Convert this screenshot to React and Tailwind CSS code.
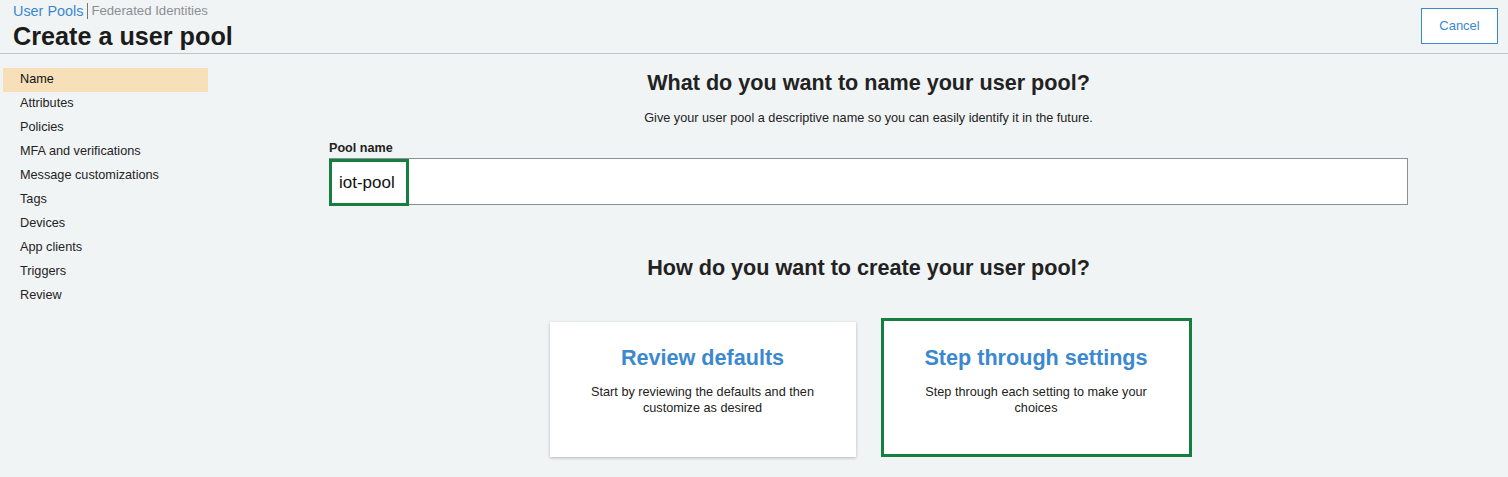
import React from 'react';

const steps = [
    'Name',
    'Attributes',
    'Policies',
    'MFA and verifications',
    'Message customizations',
    'Tags',
    'Devices',
    'App clients',
    'Triggers',
    'Review',
];

export default function App() {
    return (
        <div className="min-h-[477px] w-full bg-[#f1f4f5] text-[#16191f] font-['Liberation_Sans',Arial,sans-serif]">
            {/* header */}
            <div className="flex justify-between items-start h-[54px] border-b border-[#c3c6c8] pl-[13px] pr-[10px]">
                <div>
                    <div className="flex items-center leading-[16px] pt-[3px]">
                        <span className="text-[#3b88cf] text-[14.4px]">User Pools</span>
                        <span className="ml-[4px] mr-[3px] h-[16px] w-px bg-[#777]" />
                        <span className="text-[#8b8f93] text-[13.2px]">Federated Identities</span>
                    </div>
                    <h1 className="text-[25.2px] leading-[30px] font-bold text-[#1b1b1b] mt-[2px]">Create a user pool</h1>
                </div>
                <button className="mt-[8px] w-[77px] h-[36px] border border-[#3b88cf] bg-white text-[#3b88cf] text-[13px]">
                    Cancel
                </button>
            </div>

            <div className="flex">
                {/* sidebar */}
                <div className="w-[208px] pl-[3px] pt-[14px] shrink-0">
                    {steps.map((s, i) => (
                        <div
                            key={s}
                            className={`h-[24px] pl-[17px] flex items-center text-[12.7px] ${i === 0 ? 'bg-[#f6dfb9] text-[#111]' : 'text-[#232323]'}`}
                        >
                            {s}
                        </div>
                    ))}
                </div>

                {/* main */}
                <div className="flex-1 pl-[121px] pr-[100px]">
                    <h2 className="text-center text-[21.6px] leading-[24px] font-bold mt-[17px] text-[#222]">
                        What do you want to name your user pool?
                    </h2>
                    <p className="text-center text-[12.7px] leading-[16px] mt-[15px] text-[#222]">
                        Give your user pool a descriptive name so you can easily identify it in the future.
                    </p>
                    <div className="text-[12.6px] leading-[14px] font-bold mt-[15px] text-[#222]">Pool name</div>
                    <div className="relative mt-[3px] h-[47px] border border-[#879196] bg-white">
                        <div className="absolute left-[-1px] top-0 h-[47px] w-[80px] border-[3px] border-[#167f40] flex items-center pl-[7px] text-[17px] text-[#111]">
                            iot-pool
                        </div>
                    </div>

                    <h2 className="text-center text-[21.6px] leading-[24px] font-bold mt-[51px] text-[#222]">
                        How do you want to create your user pool?
                    </h2>

                    <div className="flex justify-center items-end gap-[25px] mt-[38px] pl-[4px]">
                        <div className="w-[306px] h-[135px] bg-white shadow-[0_1px_3px_rgba(0,0,0,0.25)] flex flex-col items-center pt-[24px]">
                            <div className="text-[21.6px] leading-[24px] font-bold text-[#3b88cf]">Review defaults</div>
                            <p className="mt-[14px] text-[12.7px] leading-[16px] text-center w-[250px] text-[#222]">
                                Start by reviewing the defaults and then customize as desired
                            </p>
                        </div>
                        <div className="w-[311px] h-[139px] bg-white border-[3px] border-[#167f40] flex flex-col items-center pt-[25px]">
                            <div className="text-[21.6px] leading-[24px] font-bold text-[#3b88cf]">Step through settings</div>
                            <p className="mt-[14px] text-[12.7px] leading-[16px] text-center w-[250px] text-[#222]">
                                Step through each setting to make your choices
                            </p>
                        </div>
                    </div>
                </div>
            </div>
        </div>
    );
}
